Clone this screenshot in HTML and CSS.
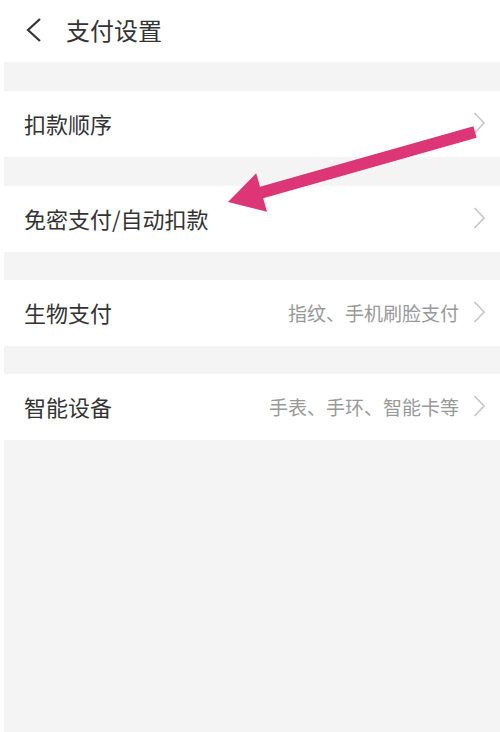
FILE: index.html
```html
<!DOCTYPE html>
<html lang="zh-CN">
<head>
  <meta charset="UTF-8">
  <title>支付设置</title>
  <link rel="stylesheet" href="styles.css">
</head>
<body>
<div class="page">
  <div class="header">
    <svg class="back" width="18" height="26" viewBox="0 0 18 26">
      <path d="M15 2 L3 13 L15 24" fill="none" stroke="#333" stroke-width="2.2"/>
    </svg>
    <h1>支付设置</h1>
  </div>

  <div class="list">
    <div class="gap"></div>
    <div class="row">
      <span class="label">扣款顺序</span>
      <svg class="chev" width="12" height="22" viewBox="0 0 12 22"><path d="M1.5 1 L11 11 L1.5 21" fill="none" stroke="#c9c9c9" stroke-width="1.8"/></svg>
    </div>
    <div class="gap"></div>
    <div class="row">
      <span class="label">免密支付/自动扣款</span>
      <svg class="chev" width="12" height="22" viewBox="0 0 12 22"><path d="M1.5 1 L11 11 L1.5 21" fill="none" stroke="#c9c9c9" stroke-width="1.8"/></svg>
    </div>
    <div class="gap gap-sm"></div>
    <div class="row">
      <span class="label">生物支付</span>
      <span class="value">指纹、手机刷脸支付</span>
      <svg class="chev" width="12" height="22" viewBox="0 0 12 22"><path d="M1.5 1 L11 11 L1.5 21" fill="none" stroke="#c9c9c9" stroke-width="1.8"/></svg>
    </div>
    <div class="gap gap-sm"></div>
    <div class="row">
      <span class="label">智能设备</span>
      <span class="value">手表、手环、智能卡等</span>
      <svg class="chev" width="12" height="22" viewBox="0 0 12 22"><path d="M1.5 1 L11 11 L1.5 21" fill="none" stroke="#c9c9c9" stroke-width="1.8"/></svg>
    </div>
    <div class="rest"></div>
  </div>

  <svg class="arrow" width="500" height="732" viewBox="0 0 500 732">
    <polygon fill="#dc3677" points="473.4,126.2 476.6,137.8 263.2,198.3 267,211.7 228,202 256.2,173.3 260,186.7"/>
  </svg>
</div>
</body>
</html>
```

FILE: styles.css
```css
html, body {
  margin: 0;
  padding: 0;
  background: #fff;
}
body {
  font-family: "Noto Sans CJK SC", "Noto Sans", sans-serif;
  color: #333;
}
.page {
  position: relative;
  width: 500px;
  height: 732px;
  overflow: hidden;
  display: flex;
  flex-direction: column;
}
.header {
  height: 62px;
  display: flex;
  align-items: center;
  padding-left: 25px;
  box-sizing: border-box;
}
.back {
  margin-top: -2px;
}
.header h1 {
  margin: 0 0 0 23px;
  font-size: 24px;
  font-weight: normal;
  line-height: 1;
  margin-top: -3px;
}
.list {
  flex: 1;
  display: flex;
  flex-direction: column;
  margin-left: 4px;
}
.gap {
  height: 29px;
  background: #f4f4f4;
}
.gap-sm {
  height: 28px;
}
.row {
  height: 66px;
  background: #fff;
  display: flex;
  align-items: center;
  padding: 0 15px 0 20px;
}
.label {
  font-size: 22px;
  line-height: 1;
  flex: 1;
  margin-top: -2px;
}
.value {
  font-size: 19px;
  line-height: 1;
  color: #999;
  margin-right: 14px;
  margin-top: -2px;
}
.chev {
  margin-top: -2px;
}
.rest {
  flex: 1;
  background: #f4f4f4;
}
.arrow {
  position: absolute;
  left: 0;
  top: 0;
}
```
